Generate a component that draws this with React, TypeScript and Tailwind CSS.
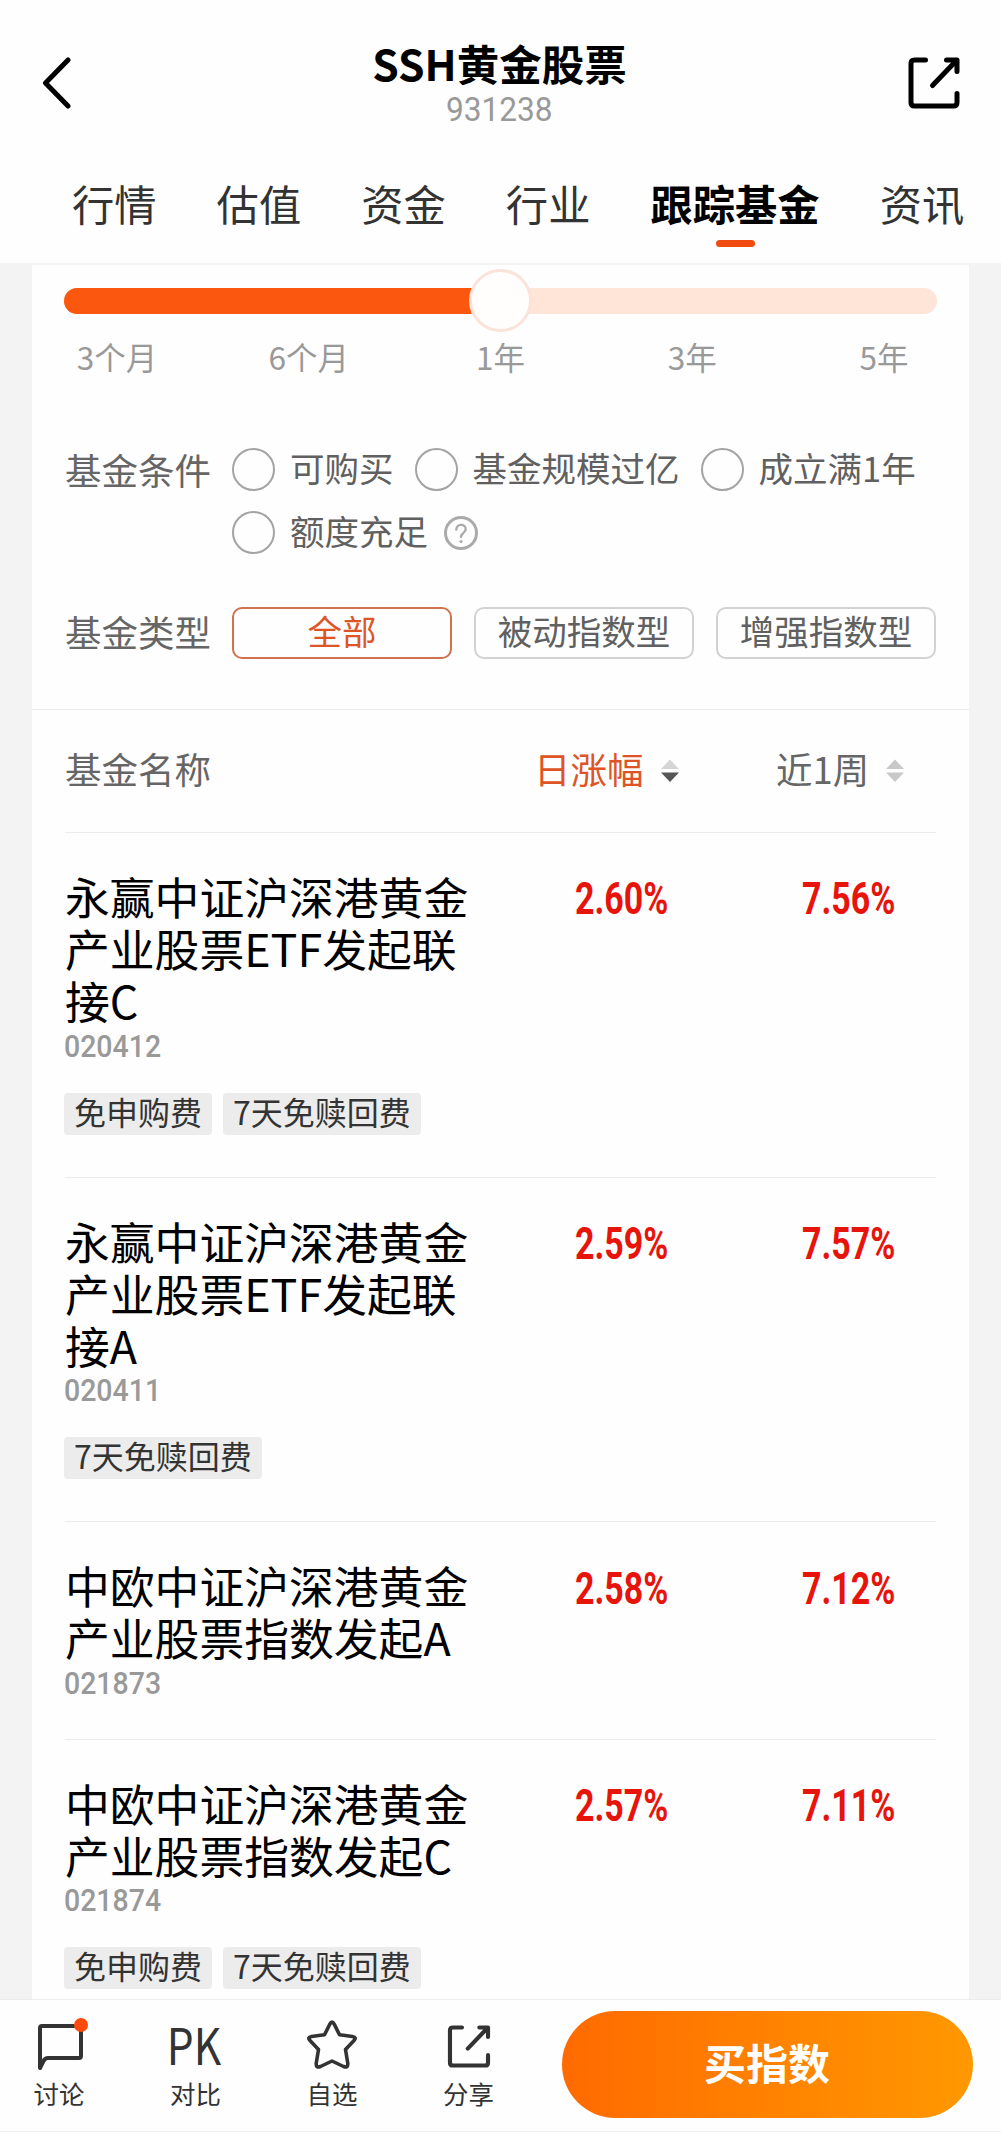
import { ReactNode } from "react";

const tabs = ["行情", "估值", "资金", "行业", "跟踪基金", "资讯"];
const periods = ["3个月", "6个月", "1年", "3年", "5年"];
const fundTypes = ["全部", "被动指数型", "增强指数型"];

interface Fund {
  name: string;
  code: string;
  day: string;
  week: string;
  tags: string[];
}

const funds: Fund[] = [
  {
    name: "永赢中证沪深港黄金产业股票ETF发起联接C",
    code: "020412",
    day: "2.60%",
    week: "7.56%",
    tags: ["免申购费", "7天免赎回费"],
  },
  {
    name: "永赢中证沪深港黄金产业股票ETF发起联接A",
    code: "020411",
    day: "2.59%",
    week: "7.57%",
    tags: ["7天免赎回费"],
  },
  {
    name: "中欧中证沪深港黄金产业股票指数发起A",
    code: "021873",
    day: "2.58%",
    week: "7.12%",
    tags: [],
  },
  {
    name: "中欧中证沪深港黄金产业股票指数发起C",
    code: "021874",
    day: "2.57%",
    week: "7.11%",
    tags: ["免申购费", "7天免赎回费"],
  },
];

function ShareIcon({ className }: { className: string }) {
  return (
    <svg
      viewBox="0 0 52 52"
      className={className}
      fill="none"
      stroke="currentColor"
      strokeWidth="5"
      strokeLinecap="round"
      strokeLinejoin="round"
    >
      <path d="M17.500 3H6.500Q3 3 3 6.500V45.500Q3 49 6.500 49H45.500Q49 49 49 45.500V36.500" />
      <path d="M38.500 3H49V14.500M47.500 4.500L24.500 28.500" />
    </svg>
  );
}

function Header() {
  return (
    <header className="h-[263px] shrink-0 bg-[#fefefe]">
      <div className="flex h-[166px] items-center justify-between pl-[41px] pr-[41px]">
        <svg
          viewBox="0 0 32 52"
          className="h-[52px] w-8"
          fill="none"
          stroke="#000"
          strokeWidth="5"
          strokeLinecap="round"
          strokeLinejoin="round"
        >
          <path d="M27 3L4.500 26L27 49" />
        </svg>
        <div className="flex flex-col items-center pl-[18px] pt-0.5">
          <h1 className="text-[42.500px] font-bold leading-[50px] text-black">
            SSH黄金股票
          </h1>
          <span className="scale-x-93 font-[Roboto] text-[34px] leading-[42px] text-[#999]">
            931238
          </span>
        </div>
        <ShareIcon className="h-[52px] w-[52px] text-black" />
      </div>
      <nav className="flex gap-[60px] pl-[72px]">
        {tabs.map((tab) =>
          tab === "跟踪基金" ? (
            <div key={tab} className="flex flex-col items-center">
              <span className="whitespace-nowrap text-[42.300px] font-bold leading-[74px] text-black">
                {tab}
              </span>
              <span className="h-[7px] w-[39px] rounded-full bg-[#f04b10]" />
            </div>
          ) : (
            <span
              key={tab}
              className="whitespace-nowrap text-[42.300px] leading-[74px] text-[#333]"
            >
              {tab}
            </span>
          )
        )}
      </nav>
    </header>
  );
}

function PeriodSlider() {
  return (
    <div className="-mx-px">
      <div className="flex h-[63px] items-center">
        <div className="relative flex h-[26px] w-full items-center justify-center rounded-full bg-[#ffe4d8]">
          <div className="absolute inset-y-0 left-0 w-1/2 rounded-l-full bg-[#fc570f]" />
          <div className="relative h-[63px] w-[63px] shrink-0 rounded-full border-3 border-[#fbe3da] bg-[#fffefd]" />
        </div>
      </div>
      <div className="mt-1 flex justify-between px-0.5">
        {periods.map((p) => (
          <span
            key={p}
            className="w-[102px] text-center text-[31.500px] leading-[41px] text-[#999]"
          >
            {p}
          </span>
        ))}
      </div>
    </div>
  );
}

function Radio({ label, children }: { label: string; children?: ReactNode }) {
  return (
    <div className="flex h-[63px] items-center">
      <span className="h-[43px] w-[43px] rounded-full border-2 border-[#a3a3a3]" />
      <span className="ml-[15px] whitespace-nowrap pb-[5px] text-[34.500px] leading-[42px] text-[#606060]">
        {label}
      </span>
      {children}
    </div>
  );
}

function Filters() {
  return (
    <>
      <div className="mt-[61px] flex">
        <span className="w-[167px] shrink-0 text-[36.500px] leading-[64px] text-[#666]">
          基金条件
        </span>
        <div>
          <div className="flex gap-[21px]">
            <Radio label="可购买" />
            <Radio label="基金规模过亿" />
            <Radio label="成立满1年" />
          </div>
          <Radio label="额度充足">
            <svg viewBox="0 0 34 34" className="ml-4 h-[34px] w-[34px]" fill="none" stroke="#aaa">
              <circle cx="17" cy="17" r="15.500" strokeWidth="3" />
              <path
                d="M12.300 13.700C12.300 7.400 21.700 7.400 21.700 13.200C21.700 16.700 17 16.900 17 21"
                strokeWidth="2.300"
                strokeLinecap="round"
              />
              <circle cx="17" cy="25.500" r="1.600" fill="#aaa" stroke="none" />
            </svg>
          </Radio>
        </div>
      </div>
      <div className="mt-[43px] flex items-center">
        <span className="w-[167px] shrink-0 pb-0.5 text-[36.500px] leading-[50px] text-[#666]">
          基金类型
        </span>
        <div className="flex gap-[22px]">
          {fundTypes.map((type, i) => (
            <span
              key={type}
              className={
                i === 0
                  ? "h-[52px] w-[220px] rounded-[10px] border-2 border-[#d0714f] text-center text-[34.500px] leading-[43px] text-[#dd5526]"
                  : "h-[52px] w-[220px] rounded-[10px] border-2 border-[#d2d2d2] text-center text-[34.500px] leading-[43px] text-[#606060]"
              }
            >
              {type}
            </span>
          ))}
        </div>
      </div>
    </>
  );
}

function SortIcon({ active = false }: { active?: boolean }) {
  return (
    <svg viewBox="0 0 18 24" className="ml-[17px] mt-[3px] h-6 w-[18px]">
      <path d="M9 .5L18 10H0Z" fill={active ? "#d6d6d6" : "#c9c9c9"} />
      <path d="M0 13.500H18L9 23Z" fill={active ? "#555" : "#c9c9c9"} />
    </svg>
  );
}

function FundRow({ fund }: { fund: Fund }) {
  return (
    <li className="flex border-b border-[#ececec] pb-[39px] pt-[37px]">
      <div className="w-[510px] shrink-0">
        <h2 className="w-[420px] break-all text-[44.800px] leading-[52.200px] text-black">
          {fund.name}
        </h2>
        <p className="-ml-px mt-[3px] w-fit origin-left scale-x-89 font-[Roboto] text-[32px] font-medium leading-[33px] text-[#999]">
          {fund.code}
        </p>
        {fund.tags.length > 0 && (
          <div className="-ml-px mb-[3px] mt-[30px] flex gap-[11px]">
            {fund.tags.map((tag) => (
              <span
                key={tag}
                className="h-[42px] rounded-[4px] bg-[#ececec] px-2.5 text-[32px] leading-[36px] text-[#333]"
              >
                {tag}
              </span>
            ))}
          </div>
        )}
      </div>
      <div className="mt-1 flex h-[52px] items-center font-[Roboto] text-[43.500px] font-bold text-[#e7140c]">
        <span className="w-[227px] origin-left scale-x-78">{fund.day}</span>
        <span className="origin-left scale-x-78">{fund.week}</span>
      </div>
    </li>
  );
}

function NavItem({ label, children }: { label: string; children: ReactNode }) {
  return (
    <div className="flex w-[52px] flex-col items-center">
      <div className="flex h-[62px] items-end justify-center">{children}</div>
      <span className="mt-[5px] whitespace-nowrap text-[25.500px] leading-[32px]">{label}</span>
    </div>
  );
}

function BottomBar() {
  return (
    <footer className="flex h-[133px] shrink-0 border-y border-[#ededed] bg-[#fefefe] text-[#333]">
      <div className="flex gap-[84.500px] pl-[33px] pt-2.5">
        <NavItem label="讨论">
          <svg viewBox="0 0 54 54" className="ml-1 h-[54px] w-[54px]" fill="none">
            <path
              d="M6 50V10Q6 8 8 8H45Q47 8 47 10V38Q47 40 45 40H14Q11 40 9.500 43Z"
              stroke="#333"
              strokeWidth="4"
              strokeLinejoin="round"
            />
            <circle cx="47" cy="7" r="7" fill="#fb4a0b" />
          </svg>
        </NavItem>
        <NavItem label="对比">
          <span className="mr-[3px] scale-x-85 text-[50px] leading-[57px]">PK</span>
        </NavItem>
        <NavItem label="自选">
          <svg viewBox="0 0 54 54" className="h-[54px] w-[54px]" fill="none">
            <path
              d="M24.800 6.200Q27 2 29.200 6.200L34.500 16.800L47.500 18.500Q52 19.300 49 22.500L40.500 31.500L42.800 45.500Q43 50.500 38.500 48.500L27 43L15.500 48.500Q11 50.500 11.200 45.500L13.500 31.500L5 22.500Q2 19.300 6.500 18.500L19.500 16.800Z"
              stroke="#333"
              strokeWidth="3.600"
              strokeLinejoin="round"
            />
          </svg>
        </NavItem>
        <NavItem label="分享">
          <ShareIcon className="mb-1 h-[43px] w-[46px]" />
        </NavItem>
      </div>
      <button className="ml-[67px] mt-[11px] h-[107px] w-[411px] shrink-0 rounded-full bg-linear-to-r from-[#ff6a00] to-[#ff9800] pb-1.5 text-[42px] font-bold text-white">
        买指数
      </button>
    </footer>
  );
}

export default function App() {
  return (
    <div className="flex h-[2132px] w-[1001px] flex-col overflow-hidden bg-[#f3f3f3] font-['Noto_Sans_CJK_SC',sans-serif]">
      <Header />
      <main className="mt-0.5 min-h-0 flex-1 overflow-hidden px-8">
        <div className="bg-[#fefefe]">
          <section className="h-[445px] border-b border-[#ececec] px-[33px] pt-[4px]">
            <PeriodSlider />
            <Filters />
          </section>
          <section className="px-[33px]">
            <div className="flex h-[123px] items-center border-b border-[#ececec] pb-[3px] text-[36.500px] text-[#666]">
              <span className="w-[469px]">基金名称</span>
              <div className="flex w-[242px] items-center text-[#dd5526]">
                日涨幅
                <SortIcon active />
              </div>
              <div className="flex items-center">
                近1周
                <SortIcon />
              </div>
            </div>
            <ul>
              {funds.map((fund) => (
                <FundRow key={fund.code} fund={fund} />
              ))}
            </ul>
          </section>
        </div>
      </main>
      <BottomBar />
    </div>
  );
}
